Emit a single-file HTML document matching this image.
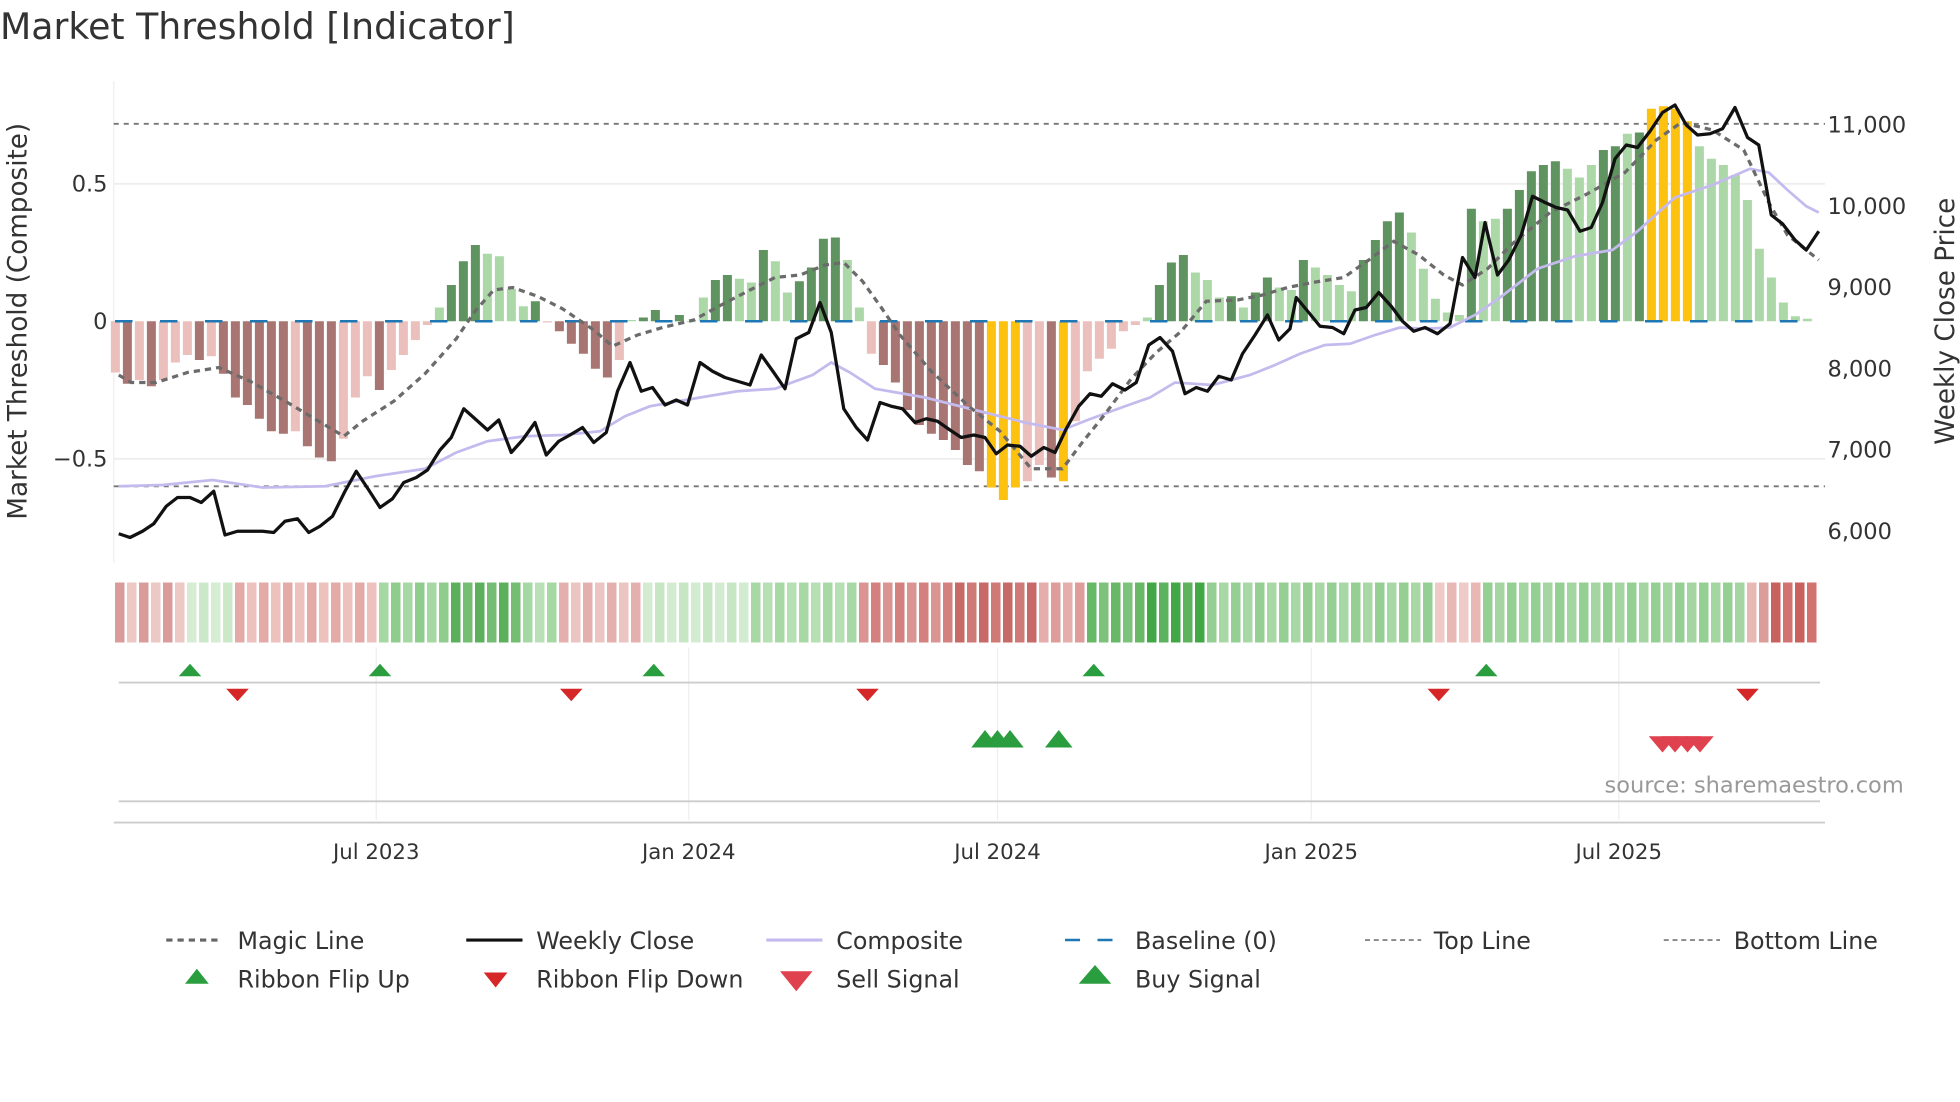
<!DOCTYPE html>
<html><head><meta charset="utf-8"><style>
html,body{margin:0;padding:0;background:#fff;}
svg{display:block;font-family:"DejaVu Sans","Liberation Sans",sans-serif;}
</style></head><body>
<svg id="s" width="1960" height="1102" viewBox="0 0 1568 881.6" xmlns="http://www.w3.org/2000/svg">
<rect width="1568" height="882" fill="#fff"/>
<text x="0" y="31" font-size="29" fill="#333">Market Threshold [Indicator]</text>
<line x1="91" y1="65" x2="91" y2="450" stroke="#eee" stroke-width="1"/>
<line x1="91" y1="147" x2="1460" y2="147" stroke="#eee" stroke-width="1.5"/>
<line x1="91" y1="367" x2="1460" y2="367" stroke="#eee" stroke-width="1.5"/>
<line x1="91" y1="99" x2="1460" y2="99" stroke="#777" stroke-width="1.5" stroke-dasharray="4,4"/>
<line x1="91" y1="389" x2="1460" y2="389" stroke="#777" stroke-width="1.5" stroke-dasharray="4,4"/>
<g id="bars"></g>
<line x1="92" y1="257" x2="1460" y2="257" stroke="#1f77b4" stroke-width="2" stroke-dasharray="14,22"/>
<polyline id="comp" fill="none" stroke="#c4baee" stroke-width="2.2"/>
<polyline id="magic" fill="none" stroke="#6b6b6b" stroke-width="2.6" stroke-dasharray="5,4"/>
<polyline id="close" fill="none" stroke="#111" stroke-width="2.6" stroke-linejoin="round"/>
<g font-size="18" fill="#333" text-anchor="end">
<text x="86" y="153">0.5</text><text x="86" y="263">0</text><text x="86" y="373">−0.5</text>
</g>
<g font-size="18" fill="#333">
<text x="1462" y="106">11,000</text><text x="1462" y="171">10,000</text><text x="1462" y="236">9,000</text>
<text x="1462" y="301">8,000</text><text x="1462" y="366">7,000</text><text x="1462" y="431">6,000</text>
</g>
<text transform="translate(21,257) rotate(-90)" font-size="21" fill="#333" text-anchor="middle">Market Threshold (Composite)</text>
<text transform="translate(1563,257) rotate(-90)" font-size="21" fill="#333" text-anchor="middle">Weekly Close Price</text>
<g id="rib"></g>
<g stroke="#eee" stroke-width="1">
<line x1="301" y1="518" x2="301" y2="656"/><line x1="551" y1="518" x2="551" y2="656"/>
<line x1="798" y1="518" x2="798" y2="656"/><line x1="1049" y1="518" x2="1049" y2="656"/>
<line x1="1295" y1="518" x2="1295" y2="656"/>
</g>
<line x1="95" y1="546" x2="1456" y2="546" stroke="#ccc" stroke-width="1.5"/>
<line x1="95" y1="641" x2="1456" y2="641" stroke="#ccc" stroke-width="1.5"/>
<line x1="91" y1="658" x2="1460" y2="658" stroke="#ccc" stroke-width="1.5"/>
<g id="sig"></g>
<text x="1523" y="634" font-size="18" fill="#999" text-anchor="end">source: sharemaestro.com</text>
<g font-size="17" fill="#333" text-anchor="middle">
<text x="301" y="687">Jul 2023</text><text x="551" y="687">Jan 2024</text><text x="798" y="687">Jul 2024</text>
<text x="1049" y="687">Jan 2025</text><text x="1295" y="687">Jul 2025</text>
</g>
<g font-size="19" fill="#333">
<line x1="133" y1="752" x2="178" y2="752" stroke="#666" stroke-width="2.5" stroke-dasharray="5,4"/><text x="190" y="759">Magic Line</text>
<line x1="373" y1="752" x2="418" y2="752" stroke="#111" stroke-width="2.5"/><text x="429" y="759">Weekly Close</text>
<line x1="613" y1="752" x2="658" y2="752" stroke="#c4baee" stroke-width="2.5"/><text x="669" y="759">Composite</text>
<line x1="852" y1="752" x2="897" y2="752" stroke="#1f77b4" stroke-width="2" stroke-dasharray="12,14"/><text x="908" y="759">Baseline (0)</text>
<line x1="1092" y1="752" x2="1137" y2="752" stroke="#888" stroke-width="1.5" stroke-dasharray="4,3"/><text x="1147" y="759">Top Line</text>
<line x1="1331" y1="752" x2="1376" y2="752" stroke="#888" stroke-width="1.5" stroke-dasharray="4,3"/><text x="1387" y="759">Bottom Line</text>
<polygon points="148,787 167,787 157.5,775" fill="#2a9d3f"/><text x="190" y="790">Ribbon Flip Up</text>
<polygon points="387,778 406,778 396.5,790" fill="#d62728"/><text x="429" y="790">Ribbon Flip Down</text>
<polygon points="624,777 650,777 637,793" fill="#e0414f"/><text x="669" y="790">Sell Signal</text>
<polygon points="863,787 889,787 876,772" fill="#2a9d3f"/><text x="908" y="790">Buy Signal</text>
</g>
</svg>
<script>
const NS="http://www.w3.org/2000/svg";
function el(t,a,p){const e=document.createElementNS(NS,t);for(const k in a)e.setAttribute(k,a[k]);p.appendChild(e);return e;}
const B=[[-41,'l'],[-50,'d'],[-47,'l'],[-52,'d'],[-47,'l'],[-33,'l'],[-27,'l'],[-31,'d'],[-28,'l'],[-42,'d'],[-61,'d'],[-67,'d'],[-78,'d'],[-88,'d'],[-90,'d'],[-88,'l'],[-100,'d'],[-109,'d'],[-112,'d'],[-94,'l'],[-61,'l'],[-44,'l'],[-55,'d'],[-39,'l'],[-27,'l'],[-15,'l'],[-3,'l'],[11,'p'],[29,'g'],[48,'g'],[61,'g'],[54,'p'],[52,'p'],[26,'p'],[12,'p'],[16,'g'],
[-1,'l'],[-8,'d'],[-18,'d'],[-26,'d'],[-38,'d'],[-45,'d'],[-31,'l'],[1,'p'],[3,'g'],[9,'g'],[1,'p'],[5,'g'],[0,'p'],[19,'p'],[33,'g'],[37,'g'],[34,'p'],[31,'p'],[57,'g'],[48,'p'],[23,'p'],[32,'g'],[43,'g'],[66,'g'],[67,'g'],[49,'p'],[11,'p'],[-26,'l'],[-35,'d'],[-49,'d'],[-71,'d'],[-83,'d'],[-90,'d'],[-95,'d'],[-103,'d'],[-115,'d'],[-120,'d'],[-133,'y'],[-143,'y'],[-133,'y'],[-128,'l'],[-115,'l'],[-125,'d'],[-128,'y'],[-80,'l'],[-40,'l'],[-30,'l'],[-22,'l'],[-8,'l'],[-3,'l'],[3,'p'],[29,'g'],[47,'g'],[53,'g'],[39,'p'],[33,'p'],[19,'p'],[20,'g'],[11,'p'],[23,'g'],[35,'g'],[27,'p'],[25,'p'],[49,'g'],[43,'p'],[37,'p'],[29,'p'],[24,'p'],[49,'g'],[65,'g'],[80,'g'],[87,'g'],[71,'p'],[42,'p'],[18,'p'],[7,'p'],[5,'p'],[90,'g'],[80,'p'],[82,'p'],[90,'g'],[105,'g'],[120,'g'],[125,'g'],[128,'g'],[122,'p'],[115,'p'],[125,'p'],[137,'g'],[140,'g'],[150,'p'],[151,'g'],[170,'y'],[172,'y'],[170,'y'],[160,'y'],[140,'p'],[130,'p'],[125,'p'],[117,'p'],[97,'p'],[58,'p'],[35,'p'],[15,'p'],[4,'p'],[2,'p']];
const C={d:'#a87572',l:'#ebbfbb',g:'#5f935f',p:'#acd8a8',y:'#fdc10f'};
const bg=document.getElementById('bars');
B.forEach((b,i)=>{const x=92.3+9.6*i-3.6,v=b[0];el('rect',{x:x,y:v>0?257-v:257,width:7.2,height:Math.max(Math.abs(v),0.8),fill:C[b[1]]},bg);});
const rg=document.getElementById('rib');
const seg=[[92,148,['#d99c9a','#edc9c6']],[148,186,['#d6edd4','#cbe8c9']],[186,300,['#e4aaa8','#edc1be']],[300,360,['#a6d8a4','#8fcc8e']],[360,420,['#5cb05c','#74bd73']],[420,452,['#a6d8a4','#b9e0b6']],[452,518,['#ecc4c1','#e4b0ad']],[518,600,['#d3ecd1','#c7e6c4']],[600,690,['#b6dfb3','#a8d8a5']],[690,760,['#da9593','#d4807e']],[760,830,['#c76a67','#d07a77']],[830,870,['#de9c9a','#e6aeab']],[870,920,['#7cc27b','#68b867']],[920,965,['#42a845','#5db35d']],[965,1147,['#a8d8a5','#95cf93']],[1147,1185,['#efcac7','#e8b8b5']],[1185,1395,['#94cf93','#a3d6a1']],[1395,1420,['#e8b8b5','#dc9d9a']],[1420,1460,['#c9625e','#d2736f']]];
let k=0;
for(let x=92;x<1455;x+=9.6){const cx=x+4.8;let c='#ccc';for(const s of seg){if(cx>=s[0]&&cx<s[1]){c=s[2][k%2];break;}}el('rect',{x:x,y:466,width:7.6,height:48,fill:c},rg);k++;}
const sg=document.getElementById('sig');
[152,304,523,875,1189].forEach(x=>el('polygon',{points:`${x-9},541 ${x+9},541 ${x},531`,fill:'#2a9d3f'},sg));
[190,457,694,1151,1398].forEach(x=>el('polygon',{points:`${x-9},551 ${x+9},551 ${x},561`,fill:'#d62728'},sg));
[788,798,808,847].forEach(x=>el('polygon',{points:`${x-11},598 ${x+11},598 ${x},584`,fill:'#2a9d3f'},sg));
[1330,1340,1350,1360].forEach(x=>el('polygon',{points:`${x-11},589 ${x+11},589 ${x},602`,fill:'#e0414f'},sg));
const CL="95,427 104,430 114,425 123,419 133,405 142,398 152,398 161,402 171,393 180,428 190,425 200,425 210,425 219,426 228,417 238,415 247,426 256,421 266,413 276,393 285,377 295,392 304,406 314,399 323,386 333,382 342,376 352,360 361,350 371,327 380,335 390,344 399,336 409,362 418,352 428,338 437,364 447,353 456,348 466,342 475,354 485,346 494,313 504,290 513,313 522,310 532,324 541,320 550,324 560,290 570,297 580,302 590,305 600,308 609,284 619,298 628,311 637,271 647,266 656,242 665,266 675,327 685,342 694,352 704,322 713,325 722,327 732,338 741,335 750,337 760,344 769,350 779,348 788,350 797,363 806,356 816,357 825,365 835,358 844,362 853,343 863,325 872,315 881,317 890,307 900,312 909,306 919,276 928,270 938,281 948,315 957,310 966,313 975,301 985,304 994,283 1004,268 1014,252 1023,272 1032,263 1037,238 1047,250 1056,261 1066,262 1075,267 1084,248 1093,246 1103,234 1113,245 1122,257 1131,265 1140,262 1150,267 1160,259 1170,206 1180,222 1188,178 1198,220 1207,208 1217,188 1226,157 1236,162 1245,166 1254,168 1264,185 1273,182 1282,162 1292,127 1301,116 1310,118 1320,105 1330,90 1340,84 1349,100 1358,108 1368,107 1378,103 1388,86 1398,110 1407,116 1417,172 1426,179 1436,192 1445,200 1455,185";
const CP="95,389 130,388 170,384 210,390 260,389 300,381 340,375 365,362 390,353 420,349 450,348 480,345 500,333 520,325 560,318 590,313 620,311 650,300 665,290 680,298 700,311 740,318 780,328 820,338 850,344 870,336 900,325 920,318 940,306 970,308 1000,300 1020,292 1040,283 1060,276 1080,275 1100,268 1120,262 1140,263 1160,262 1180,252 1200,238 1230,215 1260,205 1290,200 1310,185 1340,158 1370,148 1400,135 1415,138 1430,152 1445,165 1455,170";
const MG="95,300 105,306 125,306 150,298 175,294 200,305 230,322 260,340 275,349 290,337 315,321 340,299 365,271 380,249 395,232 410,230 430,237 450,247 475,264 490,277 510,268 530,262 555,256 575,245 600,232 620,222 640,220 660,212 675,210 690,225 705,246 720,268 745,297 775,325 800,345 825,375 850,375 865,355 885,330 905,303 925,282 945,265 965,241 990,240 1010,236 1030,230 1050,226 1075,222 1095,208 1115,193 1135,204 1155,220 1170,228 1190,215 1210,195 1240,170 1270,155 1300,138 1325,112 1345,98 1370,104 1395,120 1415,162 1430,188 1455,208";
document.getElementById('close').setAttribute('points',CL);
document.getElementById('comp').setAttribute('points',CP);
document.getElementById('magic').setAttribute('points',MG);
</script>
</body></html>
